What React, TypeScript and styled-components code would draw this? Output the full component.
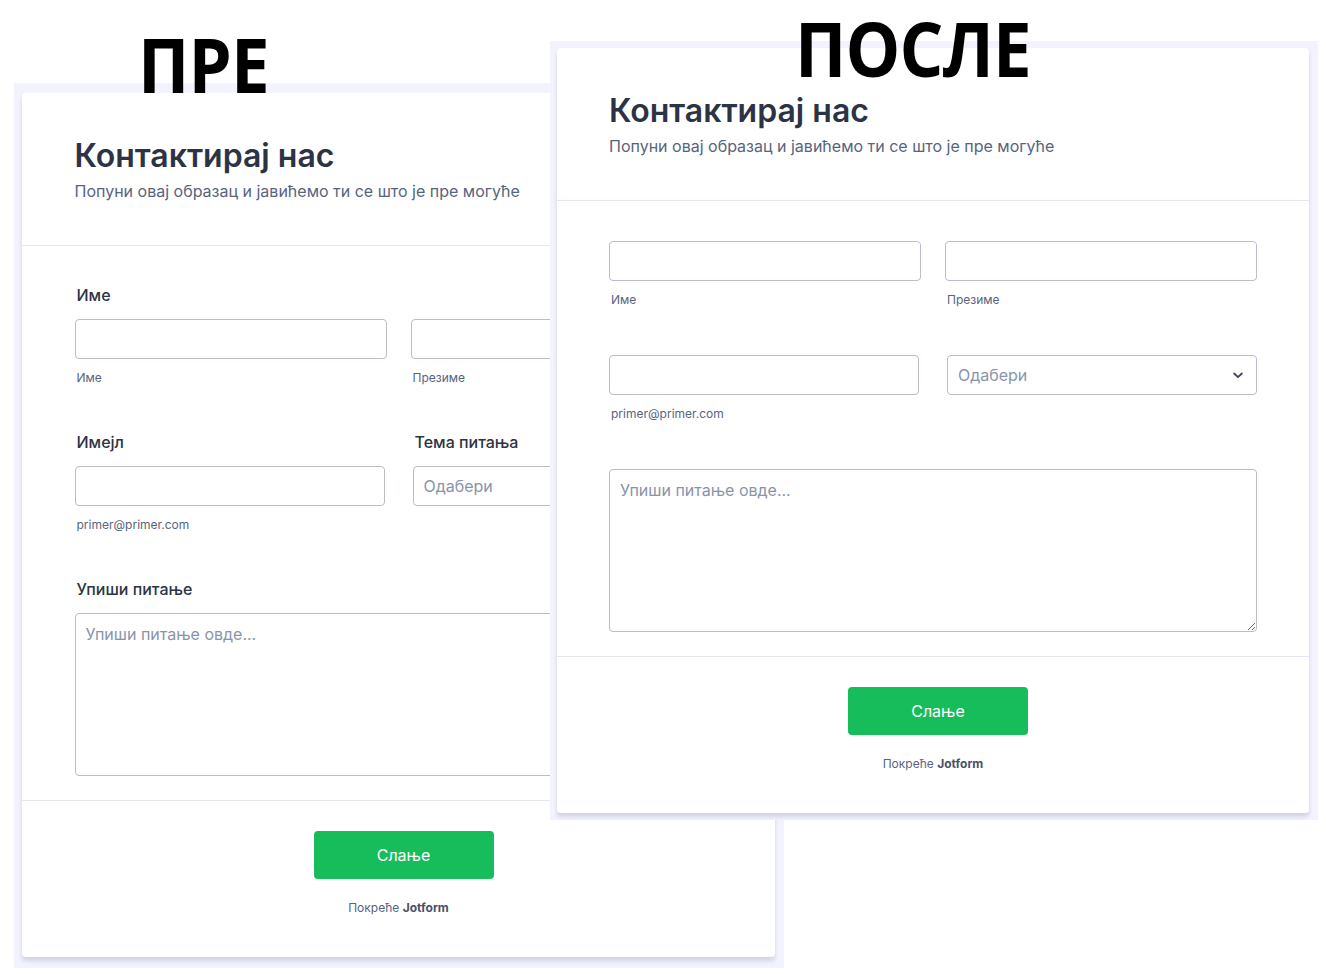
import React from "react";
import styled, { createGlobalStyle } from "styled-components";

const Global = createGlobalStyle`
  html, body { margin: 0; padding: 0; background: #ffffff; }
  body { font-family: Inter, "Noto Sans", sans-serif; }
  * { box-sizing: border-box; }
`;

const Page = styled.div`
  position: relative;
  width: 1326px;
  height: 974px;
  overflow: hidden;
  background: #ffffff;
`;

const Shot = styled.div<{ $x: number; $y: number; $pad: string; $z: number }>`
  position: absolute;
  left: ${(p) => p.$x}px;
  top: ${(p) => p.$y}px;
  z-index: ${(p) => p.$z};
  padding: ${(p) => p.$pad};
  background: #f3f3fe;
`;

const Caption = styled.div<{ $x: number; $y: number }>`
  position: absolute;
  left: ${(p) => p.$x}px;
  top: ${(p) => p.$y}px;
  z-index: 5;
  font-family: "Open Sans", "Noto Sans", sans-serif;
  font-weight: 700;
  font-size: 75px;
  line-height: 1;
  letter-spacing: -1px;
  color: #000000;
  transform: scaleX(0.92);
  transform-origin: left top;
  white-space: nowrap;
`;

const Card = styled.div<{ $w: number }>`
  width: ${(p) => p.$w}px;
  background: #ffffff;
  border-radius: 4px;
  box-shadow: 0 4px 4px rgba(87, 100, 126, 0.21);
  display: flex;
  flex-direction: column;
`;

const Inner = styled.div`
  width: 648px;
  margin: 0 auto;
`;

const Header = styled.div`
  padding: 43px 0 44px;
  border-bottom: 1px solid #e4e5f0;
`;

const Title = styled.h1`
  margin: 0;
  font-size: 32px;
  line-height: 40px;
  font-weight: 600;
  color: #2c3345;
`;

const Subtitle = styled.p`
  margin: 5px 0 0;
  font-size: 16px;
  line-height: 20px;
  color: #57647e;
`;

const Body = styled.div<{ $top: number; $gap: number }>`
  padding: ${(p) => p.$top}px 0 24px;
  border-bottom: 1px solid #e4e5f0;
  display: flex;
  flex-direction: column;
  gap: ${(p) => p.$gap}px;
`;

const Row = styled.div<{ $gap: number }>`
  display: grid;
  grid-template-columns: 1fr 1fr;
  column-gap: ${(p) => p.$gap}px;
`;

const Field = styled.div`
  display: flex;
  flex-direction: column;
`;

const Label = styled.label`
  display: block;
  font-size: 16px;
  line-height: 20px;
  font-weight: 500;
  color: #2c3345;
  padding-left: 2px;
  margin-bottom: 14px;
`;

const Sublabel = styled.span`
  font-size: 12px;
  line-height: 16px;
  color: #57647e;
  padding-left: 2px;
  margin-top: 11px;
`;

const TextInput = styled.input`
  display: block;
  width: 100%;
  height: 40px;
  margin: 0;
  padding: 0 10px;
  border: 1px solid #b8bdc9;
  border-radius: 4px;
  background: #ffffff;
  font-family: inherit;
  font-size: 16px;
  outline: none;
`;

const SelectBox = styled.div`
  display: flex;
  align-items: center;
  justify-content: space-between;
  height: 40px;
  padding: 0 13px 0 10px;
  border: 1px solid #b8bdc9;
  border-radius: 4px;
  background: #ffffff;
  font-size: 16px;
  color: #8894ab;
  overflow: hidden;
  white-space: nowrap;
`;

const Chevron = styled.svg`
  flex: none;
  width: 10px;
  height: 7px;
`;

const TextArea = styled.textarea`
  display: block;
  width: 100%;
  height: 163px;
  margin: 0;
  padding: 10px;
  border: 1px solid #b8bdc9;
  border-radius: 4px;
  background: #ffffff;
  font-family: inherit;
  font-size: 16px;
  line-height: 20px;
  resize: vertical;
  outline: none;
  &::placeholder {
    color: #8894ab;
  }
`;

const Footer = styled.div`
  padding: 30px 0 41px;
  display: flex;
  flex-direction: column;
  align-items: center;
  gap: 21px;
`;

const SubmitButton = styled.button`
  width: 180px;
  height: 48px;
  margin-left: 10px;
  border: none;
  border-radius: 4px;
  background: #18bd5b;
  color: #ffffff;
  font-family: inherit;
  font-size: 16px;
  font-weight: 400;
`;

const Powered = styled.div`
  font-size: 12px;
  line-height: 16px;
  color: #57647e;
  b {
    font-weight: 700;
    color: #4a5168;
  }
`;

const Select = () => (
  <SelectBox>
    <span>Одабери</span>
    <Chevron viewBox="0 0 10 7">
      <path d="M1.2 1.5 L5 5.2 L8.8 1.5" fill="none" stroke="#3d4559" strokeWidth="1.8" strokeLinecap="round" strokeLinejoin="round" />
    </Chevron>
  </SelectBox>
);

type FormProps = { width: number; withLabels: boolean };

const ContactForm: React.FC<FormProps> = ({ width, withLabels }) => (
  <Card $w={width}>
    <Header>
      <Inner>
        <Title>Контактирај нас</Title>
        <Subtitle>Попуни овај образац и јавићемо ти се што је пре могуће</Subtitle>
      </Inner>
    </Header>
    <Body $top={withLabels ? 39 : 40} $gap={withLabels ? 46 : 47}>
      <Inner>
        {withLabels && <Label>Име</Label>}
        <Row $gap={24}>
          <Field>
            <TextInput readOnly />
            <Sublabel>Име</Sublabel>
          </Field>
          <Field>
            <TextInput readOnly />
            <Sublabel>Презиме</Sublabel>
          </Field>
        </Row>
      </Inner>
      <Inner>
        <Row $gap={28}>
          <Field>
            {withLabels && <Label>Имејл</Label>}
            <TextInput readOnly />
            <Sublabel>primer@primer.com</Sublabel>
          </Field>
          <Field>
            {withLabels && <Label>Тема питања</Label>}
            <Select />
          </Field>
        </Row>
      </Inner>
      <Inner>
        <Field>
          {withLabels && <Label>Упиши питање</Label>}
          <TextArea placeholder="Упиши питање овде..." readOnly />
        </Field>
      </Inner>
    </Body>
    <Footer>
      <SubmitButton type="button">Слање</SubmitButton>
      <Powered>
        Покреће <b>Jotform</b>
      </Powered>
    </Footer>
  </Card>
);

export default function App() {
  return (
    <Page>
      <Global />
      <Shot $x={14} $y={83} $pad="10px 9px 11px 8px" $z={1}>
        <ContactForm width={753} withLabels />
      </Shot>
      <Shot $x={550} $y={41} $pad="7px 9px 7px 7px" $z={2}>
        <ContactForm width={752} withLabels={false} />
      </Shot>
      <Caption $x={138} $y={27}>ПРЕ</Caption>
      <Caption $x={795} $y={11}>ПОСЛЕ</Caption>
    </Page>
  );
}
